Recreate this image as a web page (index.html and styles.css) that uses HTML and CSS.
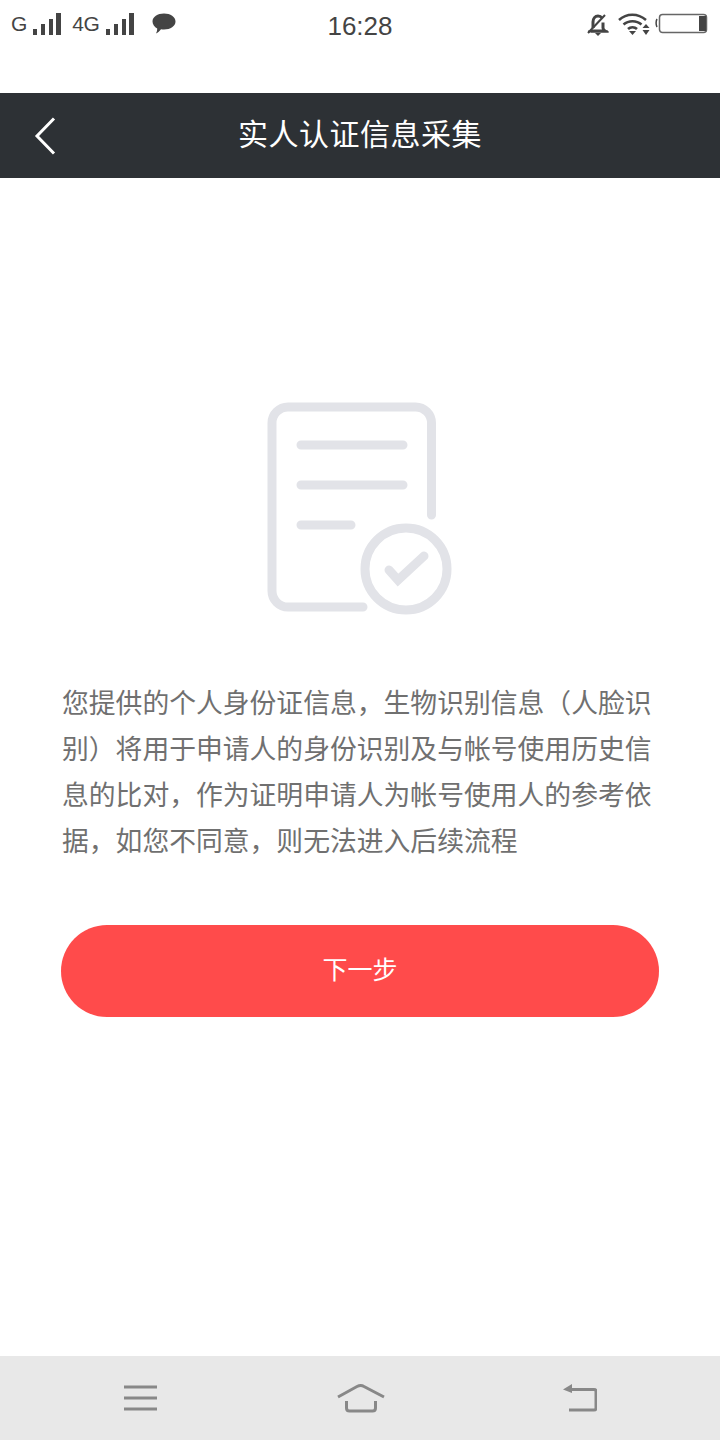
FILE: index.html
```html
<!DOCTYPE html>
<html lang="zh-CN">
<head>
  <meta charset="UTF-8">
  <meta name="viewport" content="width=device-width, initial-scale=1.0">
  <title>实人认证信息采集</title>
  <link rel="stylesheet" href="styles.css">
</head>
<body>
  <div class="status-bar">
    <div class="status-left">
      <span class="net net-g">G</span>
      <svg class="signal" width="29" height="24" viewBox="0 0 29 24"><path d="M1 23h4v-6H1zM9 23h4V12H9zM17 23h4V7h-4zM24 23h5V1h-5z" fill="#444"/></svg>
      <span class="net net-4g">4G</span>
      <svg class="signal" width="29" height="24" viewBox="0 0 29 24"><path d="M1 23h4v-6H1zM9 23h4V12H9zM17 23h4V7h-4zM24 23h5V1h-5z" fill="#444"/></svg>
      <svg class="bubble" width="24" height="22" viewBox="0 0 24 22"><path d="M12 .5c6.400 0 11.500 3.500 11.500 8s-5.100 8-11.500 8c-1 0-2-.1-3-.3-1.300 1.800-3 3.300-5 4.300.8-1.500 1.200-3 1.200-5C2.500 14 .5 11.400.5 8.500c0-4.500 5.100-8 11.500-8z" fill="#444"/></svg>
    </div>
    <div class="status-time">16:28</div>
    <div class="status-right">
      <svg width="22" height="24" viewBox="0 0 22 24"><path d="M6 16V10c0-3.500 2.200-6 5-6 1.800 0 3.200.8 4 2M16 10.500V16c0 1 .5 2 2 3H4" fill="none" stroke="#444" stroke-width="3"/><path d="M1 19.500H21" stroke="#444" stroke-width="2"/><path d="M8 21h6l-3 3z" fill="#444"/><path d="M1 21L18 3" stroke="#444" stroke-width="2"/></svg>
      <svg class="wifi" width="33" height="24" viewBox="0 0 33 24"><path d="M1 8c7.500-7 19-7 27 0M5.500 12.500c5-4.500 13-4.500 18 0M10 17c2.500-2.500 6.500-2.500 9 0" fill="none" stroke="#444" stroke-width="2.500"/><path d="M11 19h7l-3.500 4zM28 12l3.500 4h-7zM24.500 18h7L28 23z" fill="#444"/></svg>
      <svg class="battery" width="53" height="24" viewBox="0 0 53 24"><path d="M2 7c-1.200 2-1.200 6 0 8" fill="none" stroke="#444" stroke-width="1.500"/><rect x="4.500" y="2.500" width="47" height="18" rx="3" fill="#fff" stroke="#666" stroke-width="1.500"/><rect x="44" y="4" width="7" height="15" fill="#444"/></svg>
    </div>
  </div>

  <div class="title-bar">
    <svg class="back" width="60" height="44" viewBox="0 0 60 44"><path d="M54 4.500L37 22 54 39.500" fill="none" stroke="#fff" stroke-width="3"/></svg>
    <div class="title">实人认证信息采集</div>
  </div>

  <div class="content">
    <svg class="doc-icon" width="220" height="235" viewBox="0 0 220 235">
      <g fill="none" stroke="#e2e3e8" stroke-width="9" stroke-linecap="round">
        <path d="M181.500 125V33a16 16 0 0 0-16-16H38a16 16 0 0 0-16 16V201a16 16 0 0 0 16 16H113"/>
        <path d="M51 55H153M51 95H153M51 135H101"/>
        <circle cx="156" cy="179" r="41"/>
        <path d="M139 180L148 190 174 166"/>
      </g>
    </svg>
    <p class="notice">您提供的个人身份证信息，生物识别信息（人脸识别）将用于申请人的身份识别及与帐号使用历史信息的比对，作为证明申请人为帐号使用人的参考依据，如您不同意，则无法进入后续流程</p>
    <button class="next-btn" type="button">下一步</button>
  </div>

  <div class="nav-bar">
    <svg width="34" height="30" viewBox="0 0 34 30"><path d="M0 4H33M0 15H33M0 26H33" fill="none" stroke="#888" stroke-width="3"/></svg>
    <svg width="48" height="30" viewBox="0 0 48 30"><path d="M1 14L20 3.500c2.500-1.300 5-1.300 7 0L47 14" fill="none" stroke="#888" stroke-width="3"/><path d="M9.500 18v7c0 2 1 3 3 3h23c2 0 3-1 3-3v-7" fill="none" stroke="#888" stroke-width="3"/></svg>
    <svg width="34" height="30" viewBox="0 0 34 30"><path d="M7 6.500H31c1.500 0 2 .5 2 2V25c0 1.500-.5 2-2 2H6" fill="none" stroke="#888" stroke-width="3"/><path d="M0 6.500L9 1v9z" fill="#888"/></svg>
  </div>
</body>
</html>
```

FILE: styles.css
```css
* {
  box-sizing: border-box;
}
html, body {
  margin: 0;
  height: 1440px;
}
body {
  display: flex;
  flex-direction: column;
  width: 720px;
  background-color: #fff;
  font-family: "Noto Sans CJK SC", "Liberation Sans", sans-serif;
  overflow: hidden;
}

.status-bar {
  display: grid;
  grid-template-columns: 1fr auto 1fr;
  align-items: start;
  height: 93px;
  padding: 0 12px 0 11px;
  color: #444;
  font-family: "Liberation Sans", sans-serif;
}
.status-left, .status-right {
  display: flex;
  align-items: center;
  height: 48px;
}
.status-right {
  justify-content: flex-end;
}
.net {
  font-size: 21px;
  line-height: 24px;
}
.net-g {
  margin-right: 5px;
}
.net-4g {
  margin: 0 6px 0 11px;
  letter-spacing: -0.5px;
}
.bubble {
  margin-left: 18px;
}
.status-time {
  font-size: 26px;
  line-height: 50px;
  padding: 1px 0 0 1px;
}
.wifi {
  margin: 0 4px 0 9px;
}

.title-bar {
  display: grid;
  grid-template-columns: 1fr auto 1fr;
  align-items: center;
  height: 85px;
  background-color: #2d3135;
}
.back {
  display: block;
}
.title {
  padding-bottom: 8px;
  color: #fff;
  font-size: 30px;
  letter-spacing: 0.5px;
}

.content {
  flex: 1;
  display: flex;
  flex-direction: column;
  align-items: center;
  padding: 212px 61px 0;
}
.doc-icon {
  display: block;
  flex: none;
  filter: blur(0.6px);
}
.notice {
  margin: 54px 0 0;
  width: 100%;
  padding-left: 1px;
  color: #707070;
  font-size: 26.8px;
  line-height: 46px;
}
.next-btn {
  display: block;
  width: 100%;
  height: 92px;
  margin-top: 62px;
  padding: 0 0 6px;
  border: none;
  border-radius: 46px;
  background-color: #ff4b4b;
  color: #fff;
  font-family: inherit;
  font-size: 25px;
}

.nav-bar {
  display: flex;
  justify-content: space-between;
  align-items: center;
  height: 84px;
  padding: 0 123px 0 124px;
  background-color: #e8e8e8;
}
```
